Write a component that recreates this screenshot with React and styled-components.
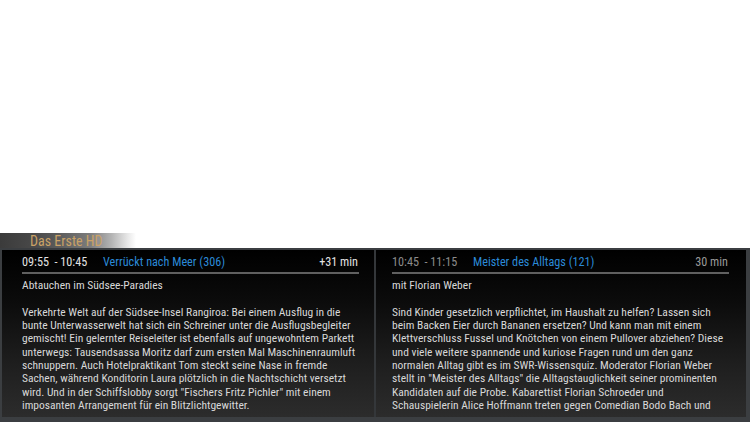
import React from "react";
import styled, { createGlobalStyle } from "styled-components";

const Global = createGlobalStyle`
  html, body { margin: 0; padding: 0; background: #ffffff; }
  body { width: 750px; height: 422px; overflow: hidden; }
`;

const FONT = `"Liberation Sans Narrow", "Roboto Condensed", "DejaVu Sans Condensed", Roboto, sans-serif`;

const Screen = styled.div`
  width: 750px;
  height: 422px;
  display: flex;
  flex-direction: column;
  justify-content: flex-end;
  font-family: ${FONT};
`;

const Tab = styled.div`
  width: 136px;
  height: 15px;
  display: flex;
  align-items: center;
  padding-left: 30px;
  box-sizing: border-box;
  background: linear-gradient(to right, #3b3b3b 0%, #474747 22%, #5e5e5e 45%, #7c7c7c 66%, #b4b4b4 82%, #e8e8e8 94%, #ffffff 100%);
  color: #caa266;
  font-size: 14px;
  white-space: nowrap;
`;

const Panel = styled.div`
  height: 174px;
  box-sizing: border-box;
  border-style: solid;
  border-color: #3b3e41;
  border-width: 2px 4px 5px 2px;
  display: flex;
  background: linear-gradient(to bottom, #000 0%, #0b0b0b 30%, #1f1f1f 70%, #2c2c2c 100%);
`;

const Column = styled.div`
  flex: 1;
  min-width: 0;
  overflow: hidden;
  padding: 3px ${(p) => p.$pr}px 0 ${(p) => p.$pl}px;
  & + & { border-left: 2px solid #34373a; }
`;

const Header = styled.div`
  display: flex;
  align-items: center;
  height: 18px;
  font-size: 12.2px;
  border-bottom: 2px solid #606060;
  padding-bottom: 1px;
  white-space: nowrap;
`;

const Time = styled.span`
  white-space: pre;
  color: ${(p) => (p.$active ? "#e2e2e2" : "#8c8c8c")};
  width: ${(p) => p.$w}px;
`;

const Title = styled.span`
  color: #2b8ad8;
  flex: 1;
`;

const Duration = styled.span`
  color: ${(p) => (p.$active ? "#e2e2e2" : "#9a9a9a")};
  padding-right: 1px;
`;

const Body = styled.div`
  padding-top: 5px;
  font-size: 11.5px;
  line-height: 13.35px;
  color: #d8d8d8;
`;

const Line = styled.div`
  white-space: nowrap;
  min-height: 13.35px;
`;

const left = {
  time: "09:55  - 10:45",
  title: "Verrückt nach Meer (306)",
  dur: "+31 min",
  sub: "Abtauchen im Südsee-Paradies",
  lines: [
    "Verkehrte Welt auf der Südsee-Insel Rangiroa: Bei einem Ausflug in die",
    "bunte Unterwasserwelt hat sich ein Schreiner unter die Ausflugsbegleiter",
    "gemischt! Ein gelernter Reiseleiter ist ebenfalls auf ungewohntem Parkett",
    "unterwegs: Tausendsassa Moritz darf zum ersten Mal Maschinenraumluft",
    "schnuppern. Auch Hotelpraktikant Tom steckt seine Nase in fremde",
    "Sachen, während Konditorin Laura plötzlich in die Nachtschicht versetzt",
    "wird. Und in der Schiffslobby sorgt \"Fischers Fritz Pichler\" mit einem",
    "imposanten Arrangement für ein Blitzlichtgewitter.",
  ],
};

const right = {
  time: "10:45  - 11:15",
  title: "Meister des Alltags (121)",
  dur: "30 min",
  sub: "mit Florian Weber",
  lines: [
    "Sind Kinder gesetzlich verpflichtet, im Haushalt zu helfen? Lassen sich",
    "beim Backen Eier durch Bananen ersetzen? Und kann man mit einem",
    "Klettverschluss Fussel und Knötchen von einem Pullover abziehen? Diese",
    "und viele weitere spannende und kuriose Fragen rund um den ganz",
    "normalen Alltag gibt es im SWR-Wissensquiz. Moderator Florian Weber",
    "stellt in \"Meister des Alltags\" die Alltagstauglichkeit seiner prominenten",
    "Kandidaten auf die Probe. Kabarettist Florian Schroeder und",
    "Schauspielerin Alice Hoffmann treten gegen Comedian Bodo Bach und",
  ],
};

function Event({ data, active, pl, pr }) {
  return (
    <Column $pl={pl} $pr={pr}>
      <Header>
        <Time $active={active} $w={81}>{data.time}</Time>
        <Title>{data.title}</Title>
        <Duration $active={active}>{data.dur}</Duration>
      </Header>
      <Body>
        <Line>{data.sub}</Line>
        <Line />
        {data.lines.map((l, i) => (
          <Line key={i}>{l}</Line>
        ))}
      </Body>
    </Column>
  );
}

export default function App() {
  return (
    <>
      <Global />
      <Screen>
        <Tab>Das Erste HD</Tab>
        <Panel>
          <Event data={left} active pl={20} pr={15} />
          <Event data={right} pl={16} pr={17} />
        </Panel>
      </Screen>
    </>
  );
}
